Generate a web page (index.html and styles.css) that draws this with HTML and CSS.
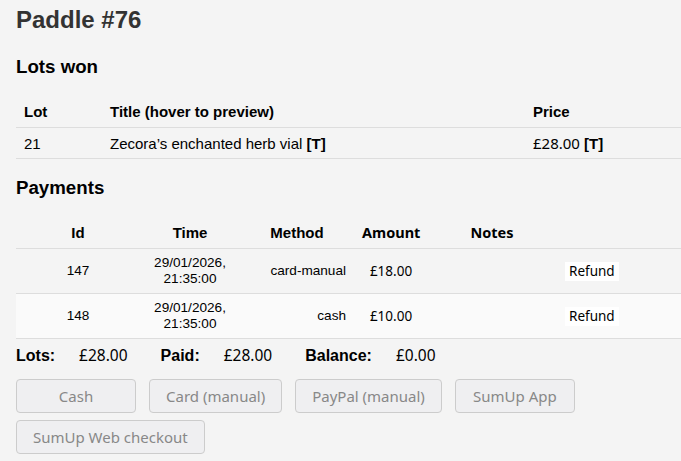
FILE: index.html
```html
<!DOCTYPE html>
<html lang="en">
<head>
    <meta charset="UTF-8">
    <meta name="viewport" content="width=device-width, initial-scale=1.0">
    <title>Paddle #76</title>
    <link rel="stylesheet" href="styles.css">
</head>
<body>
    <div class="page">
        <h1>Paddle #76</h1>

        <h3>Lots won</h3>
        <table class="lots">
            <colgroup>
                <col class="c-lot">
                <col class="c-title">
                <col>
            </colgroup>
            <thead>
                <tr>
                    <th>Lot</th>
                    <th>Title (hover to preview)</th>
                    <th>Price</th>
                </tr>
            </thead>
            <tbody>
                <tr>
                    <td>21</td>
                    <td>Zecora’s enchanted herb vial <b>[T]</b></td>
                    <td><span class="money">£28.00</span> <b>[T]</b></td>
                </tr>
            </tbody>
        </table>

        <h3 class="payments-title">Payments</h3>
        <table class="payments">
            <colgroup>
                <col class="c-id">
                <col class="c-time">
                <col class="c-method">
                <col class="c-amount">
                <col class="c-notes">
                <col>
            </colgroup>
            <thead>
                <tr>
                    <th>Id</th>
                    <th>Time</th>
                    <th>Method</th>
                    <th class="alt">Amount</th>
                    <th class="alt">Notes</th>
                    <th></th>
                </tr>
            </thead>
            <tbody>
                <tr>
                    <td class="center">147</td>
                    <td class="center">29/01/2026,<br>21:35:00</td>
                    <td class="right">card-manual</td>
                    <td class="center money">£18.00</td>
                    <td></td>
                    <td><button class="refund">Refund</button></td>
                </tr>
                <tr class="odd">
                    <td class="center">148</td>
                    <td class="center">29/01/2026,<br>21:35:00</td>
                    <td class="right">cash</td>
                    <td class="center money">£10.00</td>
                    <td></td>
                    <td><button class="refund">Refund</button></td>
                </tr>
            </tbody>
        </table>

        <div class="totals">
            <b>Lots:</b><span class="money">£28.00</span>
            <b>Paid:</b><span class="money">£28.00</span>
            <b>Balance:</b><span class="money">£0.00</span>
        </div>

        <div class="pay-buttons">
            <button class="pay" disabled>Cash</button>
            <button class="pay" disabled>Card (manual)</button>
            <button class="pay" disabled>PayPal (manual)</button>
            <button class="pay" disabled>SumUp App</button>
            <button class="pay" disabled>SumUp Web checkout</button>
        </div>
    </div>
</body>
</html>
```

FILE: styles.css
```css
body {
    margin: 0;
    background-color: #f4f4f4;
    color: #000000;
    font-family: 'Liberation Sans', Arial, sans-serif;
}

.page {
    padding: 6px 0 0 16px;
}

h1 {
    margin: 0;
    font-size: 24px;
    line-height: 28px;
    color: #333333;
}

h3 {
    margin: 22px 0 0;
    font-size: 18.7px;
    line-height: 22px;
}

.payments-title {
    margin-top: 18px;
}

table {
    width: 100%;
    border-collapse: collapse;
    table-layout: fixed;
}

th {
    font-size: 15px;
    line-height: 17px;
}

.lots {
    margin-top: 18px;
}

.lots th,
.lots td {
    text-align: left;
    padding: 7px 8px 7px;
    font-size: 15px;
    line-height: 17px;
    border-bottom: 1px solid #dddddd;
}

.lots td {
    padding-bottom: 6px;
}

.c-lot { width: 86px; }
.c-title { width: 423px; }

.payments {
    margin-top: 17px;
}

.payments th {
    padding: 8px 8px 7px;
    text-align: center;
    border-bottom: 1px solid #dddddd;
}

.payments th.alt {
    font-family: 'Noto Sans', sans-serif;
    font-size: 14.5px;
}

.payments td {
    padding: 6px 8px;
    font-size: 13.6px;
    line-height: 16px;
    border-bottom: 1px solid #dddddd;
}

.payments tr.odd td {
    background-color: #fafafa;
}

.c-id { width: 124px; }
.c-time { width: 100px; }
.c-method { width: 114px; }
.c-amount { width: 74px; }
.c-notes { width: 128px; }

.center { text-align: center; }
.right { text-align: right; }

.money {
    font-family: 'Noto Sans', sans-serif;
}

.payments td.money {
    font-size: 13.5px;
}

.refund {
    margin-left: 1px;
    padding: 1px 4px;
    border: none;
    background-color: #ffffff;
    color: #000000;
    font-family: 'Noto Sans', sans-serif;
    font-size: 13.5px;
    line-height: 17px;
}

.totals {
    display: flex;
    align-items: baseline;
    margin-top: 7px;
    font-size: 16px;
    line-height: 18px;
}

.totals b {
    margin-right: 24px;
}

.totals .money {
    margin-right: 33px;
    font-size: 15.5px;
}

.pay-buttons {
    display: flex;
    flex-wrap: wrap;
    gap: 7px 13px;
    margin-top: 14px;
    width: 580px;
}

.pay {
    min-width: 120px;
    height: 34px;
    padding: 0 16px;
    border: 1px solid #cccccc;
    border-radius: 4px;
    background-color: #efeff1;
    color: #888888;
    font-family: 'Noto Sans', sans-serif;
    font-size: 15px;
}
```
